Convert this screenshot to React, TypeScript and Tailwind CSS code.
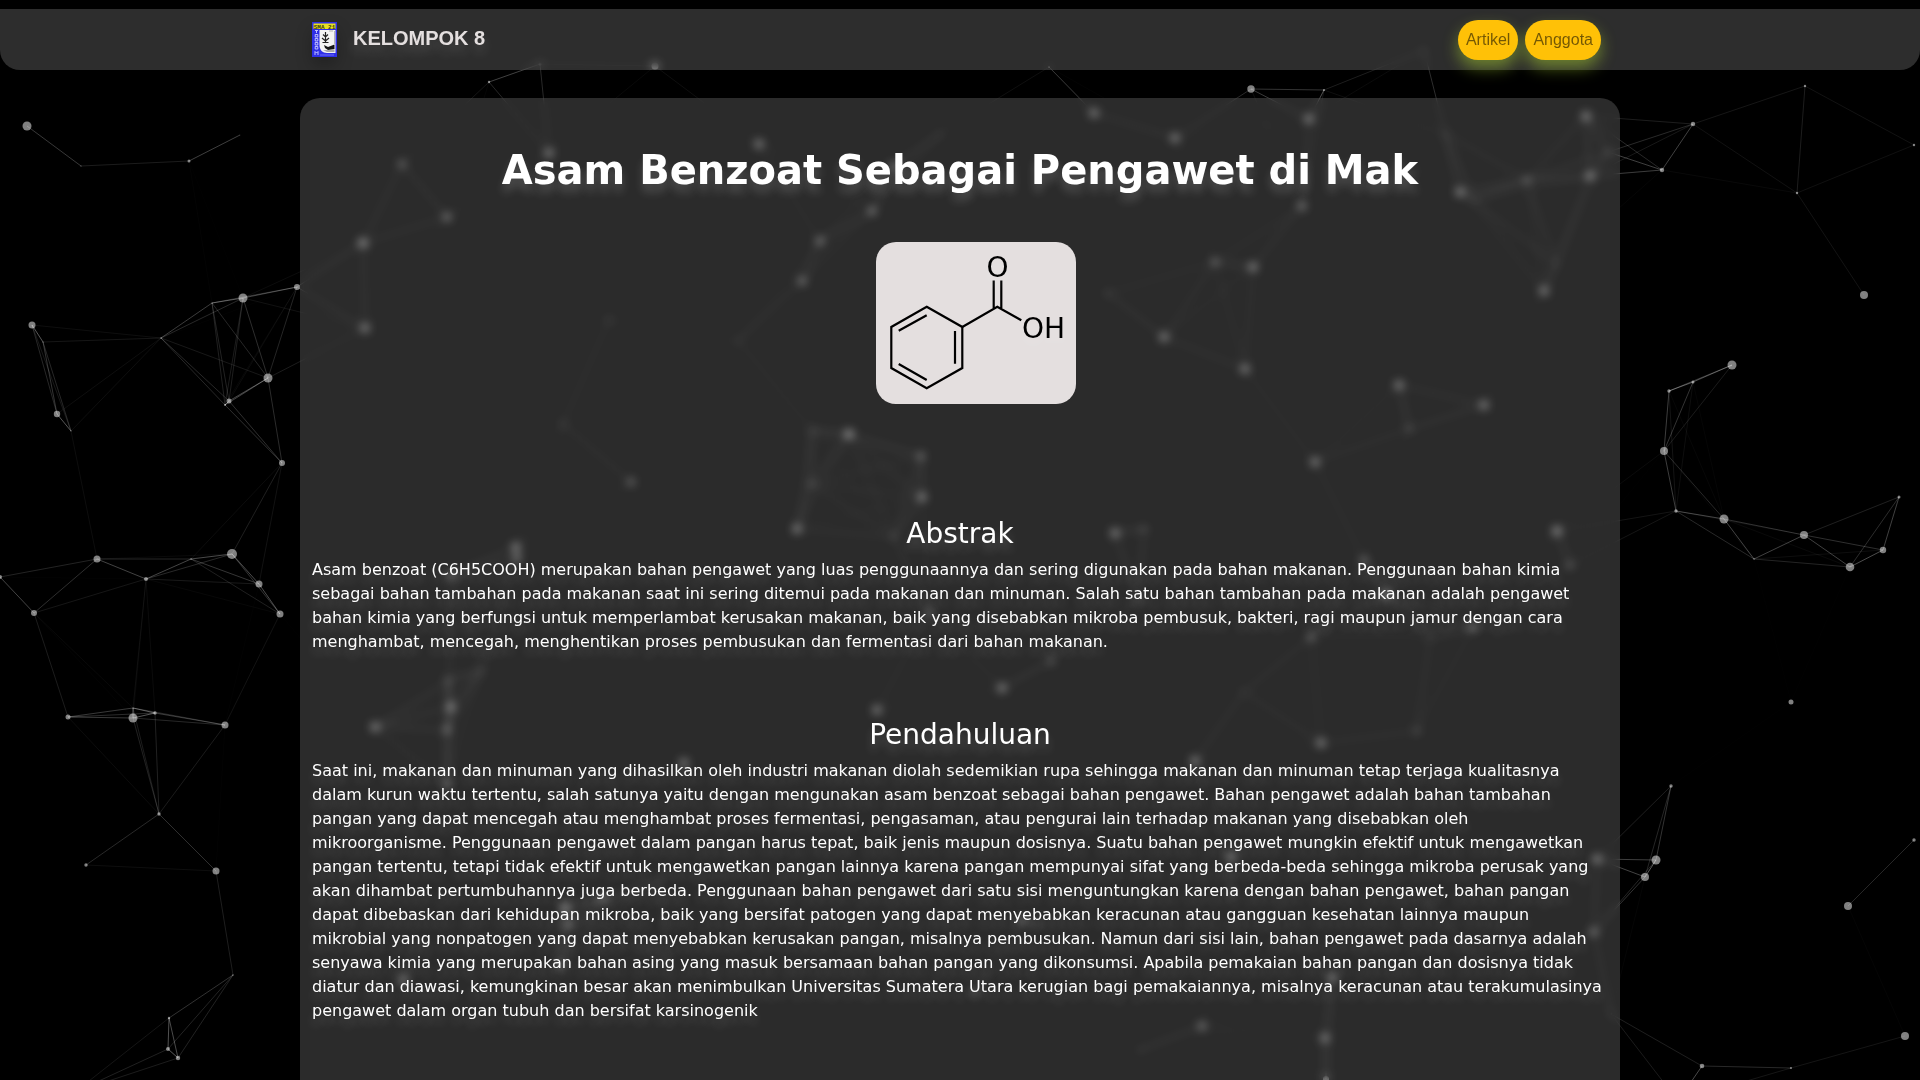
type Particle = [x: number, y: number, radius: number];

const LINK_DISTANCE = 150;
const LINK_OPACITY = 0.4;

const particles: Particle[] = [
  [27, 126, 4.5], [81, 166, 0.5], [189, 161, 1.5], [240, 135, 0.3], [32, 325, 3.5], [43, 342, 0.5],
  [161, 338, 0.7], [212, 303, 0.6], [243, 298, 4.5], [297, 287, 3], [57, 414, 3.2], [71, 431, 0.5],
  [268, 378, 4.5], [229, 401, 2.5], [225, 405, 1], [282, 463, 3], [97, 559, 3.5], [0, 577, 2],
  [34, 613, 3], [146, 579, 2], [191, 559, 0.7], [232, 554, 5], [259, 584, 3.5], [280, 614, 3.5],
  [68, 717, 2.5], [133, 708, 0.5], [133, 718, 4.5], [155, 713, 1.7], [225, 725, 3.5], [159, 814, 1.7],
  [86, 865, 1.7], [216, 871, 3.5], [233, 975, 0.7], [169, 1018, 1.2], [168, 1049, 2], [178, 1058, 2.2],
  [75, 1092, 2], [540, 64, 1.5], [489, 82, 1.2], [549, 153, 4], [655, 66, 3.5], [759, 144, 4],
  [940, 134, 1], [872, 211, 3.5], [820, 241, 3.5], [802, 281, 3.5], [893, 166, 3], [738, 341, 1],
  [1049, 67, 1], [1094, 113, 4], [1175, 138, 4], [1251, 89, 3.7], [1215, 262, 3], [1253, 267, 4],
  [1164, 337, 4], [1245, 369, 4], [1108, 293, 1.5], [1324, 90, 1], [1309, 119, 4], [1424, 50, 1],
  [1302, 206, 3.5], [1460, 192, 4], [1474, 200, 1], [1527, 180, 2.5], [1586, 116, 4], [1590, 176, 4],
  [1608, 152, 1.5], [1445, 133, 1], [1544, 291, 4], [1556, 264, 1], [1693, 124, 2.2], [1662, 170, 2.2],
  [1805, 86, 1.2], [1914, 145, 1.2], [1797, 193, 1.2], [1864, 295, 4], [1399, 385, 4], [1484, 405, 4],
  [402, 164, 3], [447, 217, 3.5], [363, 243, 4.5], [365, 328, 4], [609, 320, 1.5], [1732, 365, 4.5],
  [1693, 382, 1.5], [1669, 391, 1.7], [1664, 451, 4], [1676, 511, 1.7], [1724, 519, 4.5], [1754, 559, 0.7],
  [1804, 535, 4], [1883, 550, 3.2], [1850, 567, 4.3], [1899, 497, 1.5], [1791, 702, 2.5], [1671, 786, 1.7],
  [1656, 860, 4.5], [1645, 877, 4], [1597, 859, 4], [1914, 840, 1.7], [1848, 906, 4], [1905, 1036, 4],
  [1702, 1066, 2.3], [1791, 1068, 1], [1594, 932, 3.5], [1611, 1014, 1], [1678, 1101, 2], [563, 424, 1.5],
  [631, 482, 3], [812, 430, 1.5], [849, 434, 4.5], [921, 456, 3], [922, 497, 4], [811, 484, 2],
  [797, 529, 4], [894, 537, 1.5], [516, 547, 4], [517, 558, 3.5], [451, 575, 3], [375, 727, 4],
  [451, 707, 4], [448, 680, 2], [447, 730, 3], [877, 710, 4], [684, 763, 4], [929, 613, 3],
  [482, 670, 1], [1115, 533, 4], [1144, 529, 2], [1315, 462, 4], [1409, 429, 2], [1557, 531, 4.5],
  [1570, 565, 2.5], [1364, 560, 3], [1386, 594, 4], [1473, 628, 3], [1311, 637, 3], [1002, 688, 4],
  [1051, 661, 2.5], [1244, 692, 1], [1321, 743, 4], [1417, 731, 2], [1195, 761, 4], [1430, 637, 1],
  [1138, 600, 1.5], [565, 908, 4.5], [568, 925, 3], [560, 965, 3], [447, 785, 3], [403, 980, 4],
  [418, 945, 1], [603, 898, 3], [660, 882, 1], [1231, 857, 4], [1231, 893, 2], [1332, 978, 4],
  [1325, 1038, 4], [1326, 1079, 3], [1202, 1026, 3.5], [1140, 1050, 1], [974, 992, 2.5], [1022, 920, 3],
  [1040, 925, 1], [1429, 906, 1.5], [668, 960, 1], [1478, 960, 1],
];

const links = particles.flatMap(([x1, y1], i) =>
  particles.slice(i + 1).flatMap(([x2, y2]) => {
    const distance = Math.hypot(x2 - x1, y2 - y1);
    return distance < LINK_DISTANCE
      ? [{ x1, y1, x2, y2, opacity: LINK_OPACITY * (1 - distance / LINK_DISTANCE) }]
      : [];
  }),
);

function ParticleField() {
  return (
    <svg className="pointer-events-none fixed inset-0 h-full w-full" aria-hidden="true">
      {particles.map(([x, y, r]) => (
        <circle key={`${x}-${y}`} cx={x} cy={y} r={r} fill="#fff" fillOpacity={0.5} />
      ))}
      {links.map((l) => (
        <line
          key={`${l.x1}-${l.y1}-${l.x2}-${l.y2}`}
          x1={l.x1}
          y1={l.y1}
          x2={l.x2}
          y2={l.y2}
          stroke="#fff"
          strokeOpacity={l.opacity}
        />
      ))}
    </svg>
  );
}

function SchoolLogo() {
  return (
    <svg
      viewBox="0 0 25 35"
      className="h-[35px] w-[25px] shadow-[0_8px_16px_rgba(0,0,0,0.25)]"
      role="img"
      aria-label="Logo SMA 21"
    >
      <rect width="25" height="35" fill="#2f2fe6" />
      <rect x="1.5" y="1.5" width="22" height="5.5" fill="#e8e022" />
      <text x="12.5" y="6.6" textAnchor="middle" fontSize="6" fontWeight="700" fill="#3a3a10" fontFamily="Liberation Mono">
        SMA 21
      </text>
      <path d="M7.5 8H23.5V31H15C10.5 31 7.5 28 7.5 23Z" fill="#f4f4f4" />
      <path d="M11 28L15 30H22.5V27.5L18 28Z" fill="#aaa" />
      <path d="M13.5 10V21M11 12.500L13.500 15L16 12.500M10 16L13.500 19L17 16M10.500 20.500H16.500" stroke="#222" strokeWidth="1.200" fill="none" />
      <path d="M12 23L16 25L22.500 22.500V27L16 28L13 26Z" fill="#161616" />
      <path d="M22.500 9V22M17 9H21" stroke="#999" strokeWidth="0.700" />
      <path
        d="M3 8.500H6M4.500 8.500V11M3.200 12.500H5.800V15H3.200ZM3.200 16.500H5.800V19H3.200ZM3.200 20.500H5.800V23H3.200ZM3.200 24.500H5.800V27H3.200ZM3 33V29.500L4.500 31L6 29.500V33"
        stroke="#cfcfff"
        strokeWidth="0.900"
        fill="none"
      />
      <path d="M8 33H22" stroke="#7d7df5" strokeWidth="0.800" />
    </svg>
  );
}

function BenzoicAcid() {
  return (
    <svg
      viewBox="0 0 200 162"
      className="h-[162px] w-[200px] rounded-[20px] bg-[#e4dfdf]"
      role="img"
      aria-label="Struktur asam benzoat"
    >
      <g stroke="#000" strokeWidth="2.200" fill="none">
        <path d="M50.700 64.700L86.300 85V126L50.700 146.300L15.300 126V85Z" />
        <path d="M22.700 88.700L50.700 73.300M79 89V121.700M22.700 122L50.700 138" />
        <path d="M86.300 85L121.300 64.700L145.300 78.300M117.700 38.500V66M125.300 38.500V66" />
      </g>
      <g fontFamily="DejaVu Sans, sans-serif" fontSize="28" fill="#000">
        <text x="121.500" y="34.500" textAnchor="middle">O</text>
        <text x="146" y="96">OH</text>
      </g>
    </svg>
  );
}

function NavLink({ href, children }: { href: string; children: string }) {
  return (
    <a
      href={href}
      className="rounded-[20px] bg-[#ffc107] p-2 text-base leading-6 text-black/55 shadow-[0_8px_16px_rgba(204,255,51,0.4)]"
    >
      {children}
    </a>
  );
}

function Section({ title, children }: { title: string; children: string }) {
  return (
    <section>
      <h2 className="mb-2 text-center text-[28px] leading-[33px]">{title}</h2>
      <p className="text-base leading-6">{children}</p>
    </section>
  );
}

export default function App() {
  return (
    <div className="flex min-h-screen flex-col bg-black pt-[9px] font-['DejaVu_Sans',sans-serif] text-white">
      <ParticleField />
      <header className="relative z-10 rounded-b-[20px] bg-white/[0.175] font-['Liberation_Sans',sans-serif] backdrop-blur-[5px]">
        <nav className="mx-auto flex h-[61px] max-w-[1320px] items-center justify-between pr-[19px] pl-3">
          <a href="#" className="flex items-center gap-4">
            <SchoolLogo />
            <span className="pb-1 text-xl font-bold text-[#e4dfdf] [text-shadow:0_8px_12px_rgba(255,255,255,0.15)]">
              KELOMPOK 8
            </span>
          </a>
          <div className="flex items-center gap-[7px]">
            <NavLink href="#artikel">Artikel</NavLink>
            <NavLink href="#anggota">Anggota</NavLink>
          </div>
        </nav>
      </header>
      <main
        id="artikel"
        className="relative mx-auto mt-7 w-full max-w-[1320px] flex-1 rounded-t-[20px] bg-white/[0.17] px-3 pt-12 backdrop-blur-[5px] [text-shadow:0_8px_10px_rgba(255,255,255,0.17)]"
      >
        <h1 className="text-center text-[40px] leading-[48px] font-bold">Asam Benzoat Sebagai Pengawet di Mak</h1>
        <div className="mt-12 flex justify-center pl-8">
          <BenzoicAcid />
        </div>
        <div className="mt-[113px] flex flex-col gap-16">
          <Section title="Abstrak">
            Asam benzoat (C6H5COOH) merupakan bahan pengawet yang luas penggunaannya dan sering digunakan pada bahan
            makanan. Penggunaan bahan kimia sebagai bahan tambahan pada makanan saat ini sering ditemui pada makanan dan
            minuman. Salah satu bahan tambahan pada makanan adalah pengawet bahan kimia yang berfungsi untuk
            memperlambat kerusakan makanan, baik yang disebabkan mikroba pembusuk, bakteri, ragi maupun jamur dengan
            cara menghambat, mencegah, menghentikan proses pembusukan dan fermentasi dari bahan makanan.
          </Section>
          <Section title="Pendahuluan">
            Saat ini, makanan dan minuman yang dihasilkan oleh industri makanan diolah sedemikian rupa sehingga makanan
            dan minuman tetap terjaga kualitasnya dalam kurun waktu tertentu, salah satunya yaitu dengan mengunakan asam
            benzoat sebagai bahan pengawet. Bahan pengawet adalah bahan tambahan pangan yang dapat mencegah atau
            menghambat proses fermentasi, pengasaman, atau pengurai lain terhadap makanan yang disebabkan oleh
            mikroorganisme. Penggunaan pengawet dalam pangan harus tepat, baik jenis maupun dosisnya. Suatu bahan
            pengawet mungkin efektif untuk mengawetkan pangan tertentu, tetapi tidak efektif untuk mengawetkan pangan
            lainnya karena pangan mempunyai sifat yang berbeda-beda sehingga mikroba perusak yang akan dihambat
            pertumbuhannya juga berbeda. Penggunaan bahan pengawet dari satu sisi menguntungkan karena dengan bahan
            pengawet, bahan pangan dapat dibebaskan dari kehidupan mikroba, baik yang bersifat patogen yang dapat
            menyebabkan keracunan atau gangguan kesehatan lainnya maupun mikrobial yang nonpatogen yang dapat
            menyebabkan kerusakan pangan, misalnya pembusukan. Namun dari sisi lain, bahan pengawet pada dasarnya adalah
            senyawa kimia yang merupakan bahan asing yang masuk bersamaan bahan pangan yang dikonsumsi. Apabila
            pemakaian bahan pangan dan dosisnya tidak diatur dan diawasi, kemungkinan besar akan menimbulkan Universitas
            Sumatera Utara kerugian bagi pemakaiannya, misalnya keracunan atau terakumulasinya pengawet dalam organ
            tubuh dan bersifat karsinogenik
          </Section>
        </div>
      </main>
    </div>
  );
}
